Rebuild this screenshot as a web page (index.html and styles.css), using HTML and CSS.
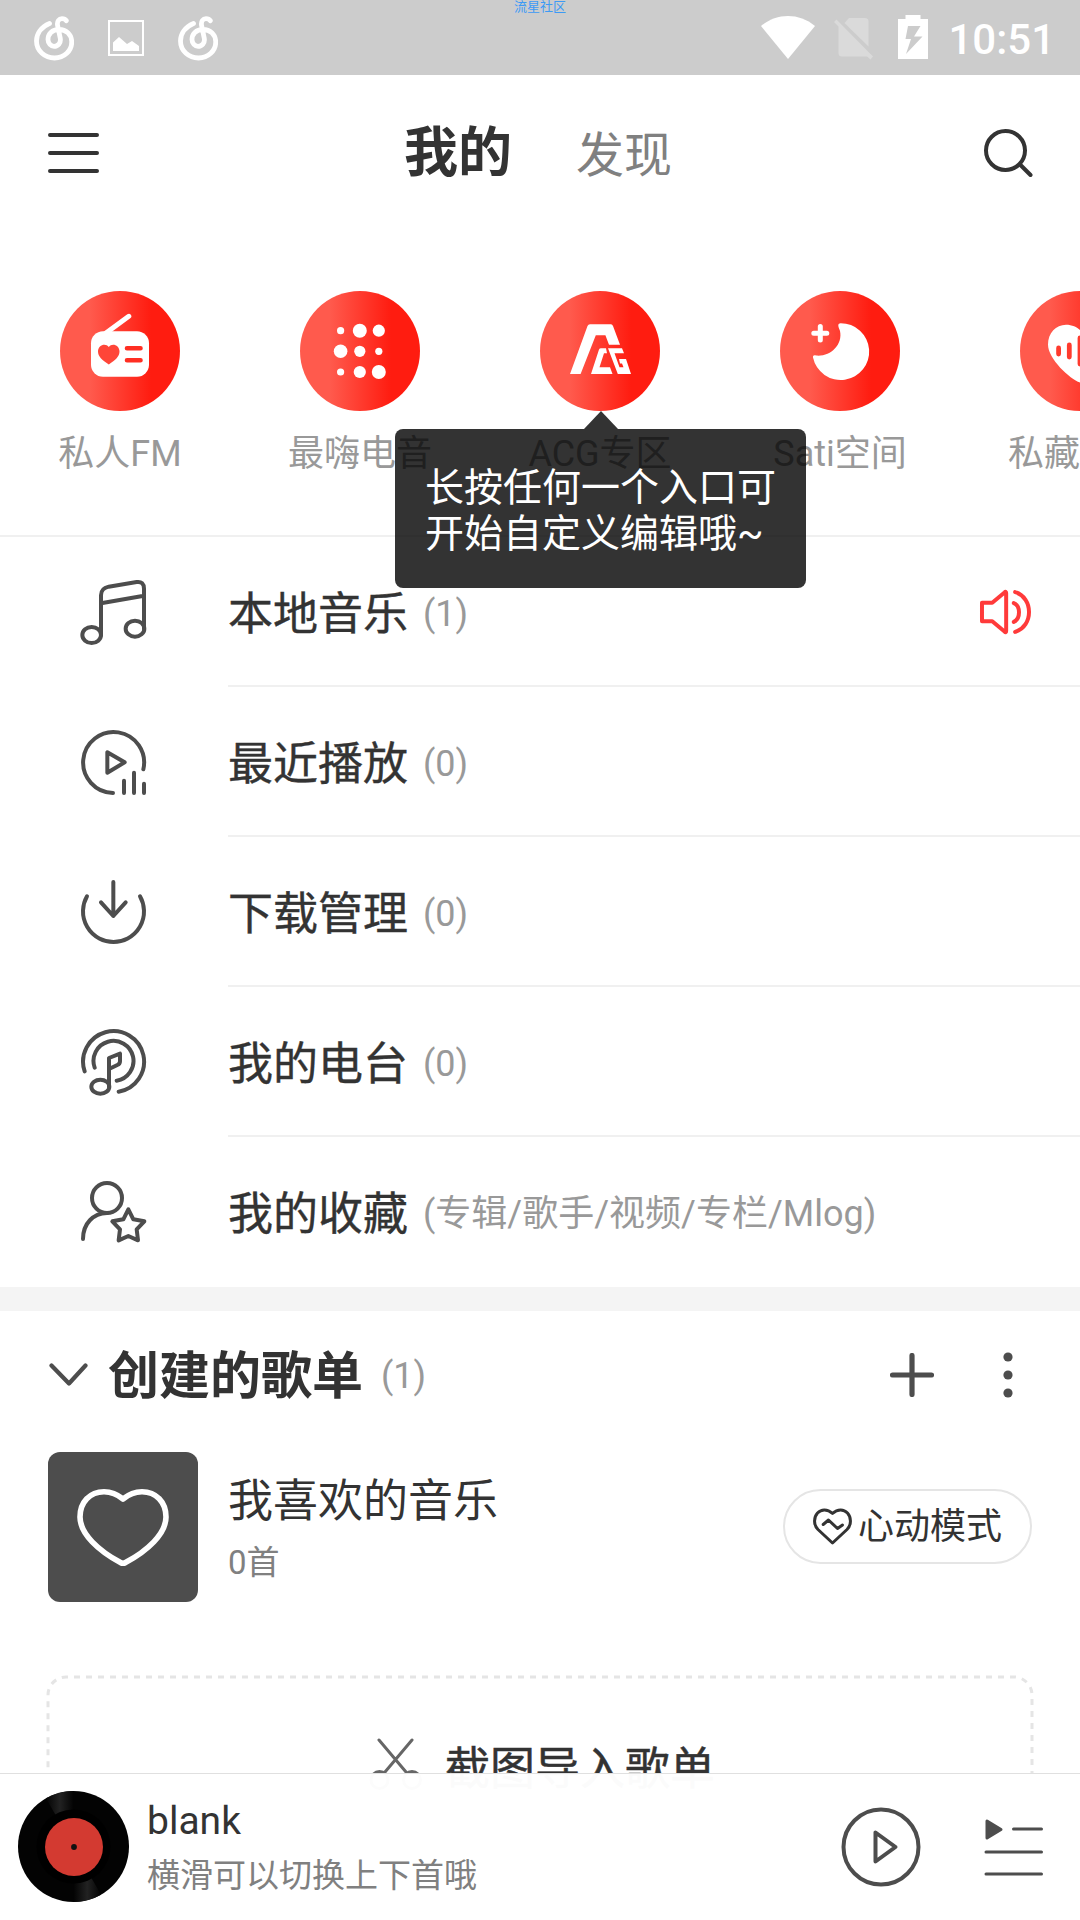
FILE: index.html
```html
<!DOCTYPE html>
<html lang="zh-CN">
<head>
<meta charset="utf-8">
<title>我的</title>
<link rel="stylesheet" href="styles.css">
</head>
<body>
<div class="screen">
  <div class="statusbar">
    <div class="status-left">
      <svg class="ic-cloud" viewBox="0 0 40 45"><path d="M15.5 7.5C7 11 2.5 18 2.5 25C2.5 35 11 42 20.5 42C30 42 38 35 37.7 25.5C37.5 18 32 13.5 25 13.5C18 13.5 14 18 14 23.5C14 27.5 17 30.3 20 30.3C24 30.3 27 27 26.3 22.5L23.5 9C23 5 25 2.7 28 2.7C30 2.7 31.5 3.5 32.3 4.7"/></svg>
      <svg class="ic-picture" viewBox="0 0 36 36"><rect x="1" y="1" width="34" height="34" fill="none" stroke="#fff" stroke-width="2"/><path d="M5 31V22.500L11 17L19 24L24 21L31 26V31Z" fill="#fff"/></svg>
      <svg class="ic-cloud" viewBox="0 0 40 45"><path d="M15.5 7.5C7 11 2.5 18 2.5 25C2.5 35 11 42 20.5 42C30 42 38 35 37.7 25.5C37.5 18 32 13.5 25 13.5C18 13.5 14 18 14 23.5C14 27.5 17 30.3 20 30.3C24 30.3 27 27 26.3 22.5L23.5 9C23 5 25 2.7 28 2.7C30 2.7 31.5 3.5 32.3 4.7"/></svg>
    </div>
    <div class="status-right">
      <svg class="ic-wifi" viewBox="0 0 54 44"><path d="M0 10C16 -3.300 38 -3.300 54 10L27 43Z" fill="#fff"/></svg>
      <svg class="ic-sim" viewBox="0 0 40 44"><g fill="#dadada"><path d="M11.500 6L16 1H32Q35.500 1 35.500 4.500V29.500Z"/><path d="M1 5L3.500 2.500L40 39.500L37.500 42.500L34 39.500H9Q5.500 39.500 5.500 36V9.500Z"/></g></svg>
      <svg class="ic-battery" viewBox="0 0 30 44"><path fill-rule="evenodd" fill="#fff" d="M0 4H7.500V0H22.500V4H30V44H0ZM10 11L7.500 24H13L8 39L24.500 21.500H16L22.500 11Z"/></svg>
      <span class="clock">10:51</span>
    </div>
    <span class="watermark">流星社区</span>
  </div>

  <header class="topbar">
    <svg class="ic-menu" viewBox="0 0 51 40"><path d="M2 2H49M2 20H49M2 38H49"/></svg>
    <nav class="tabs">
      <span class="tab tab-active">我的</span>
      <span class="tab">发现</span>
    </nav>
    <svg class="ic-search" viewBox="0 0 50 50"><circle cx="22.500" cy="22.500" r="19.500"/><path d="M37 36.500L47.500 47"/></svg>
  </header>

  <section class="entries">
    <div class="entry">
      <div class="bubble"><svg viewBox="0 0 120 120"><path d="M68.800 25.300L46 42" stroke="#fff" stroke-width="5" stroke-linecap="round"/><rect x="31" y="40.300" width="58" height="45.400" rx="12" fill="#fff"/><path d="M48.800 73.500C42 69 38 65.500 38 60.500C38 54 45.500 51.500 48.800 56C52 51.500 59.500 54 59.500 60.500C59.500 65.500 55.500 69 48.800 73.500Z" fill="#ff4538"/><path d="M67 57.300H80.500M67 69.300H80.500" stroke="#ff2e22" stroke-width="4.600" stroke-linecap="round"/></svg></div>
      <span class="entry-label">私人FM</span>
    </div>
    <div class="entry">
      <div class="bubble"><svg viewBox="0 0 120 120"><g fill="#fff"><circle cx="40.600" cy="39.700" r="3.600"/><circle cx="59.800" cy="39.700" r="7"/><circle cx="78.800" cy="39.700" r="6.100"/><circle cx="40.600" cy="60.300" r="6.800"/><circle cx="59.800" cy="60.300" r="5.600"/><circle cx="78.800" cy="60.300" r="3.600"/><circle cx="40.600" cy="81" r="3.600"/><circle cx="59.800" cy="81" r="6.100"/><circle cx="78.800" cy="81" r="7"/></g></svg></div>
      <span class="entry-label">最嗨电音</span>
    </div>
    <div class="entry">
      <div class="bubble"><svg viewBox="0 0 120 120"><g fill="#fff"><path d="M30 83L47.500 35Q48.200 33.300 50 33.300H71Q72.300 33.300 73 35L80 53.700H69L65.400 44.300H55.800L40.600 83Z"/><path d="M51 83L59 58.500Q59.500 57.300 61 57.300H66L67 62.300H64L59.500 76.300H70L72.500 83Z"/><path d="M68 57.300H82L84 62.300H74.500L79.500 76.300H83.500L82 72.500H80L79 68H86L91 83H77.800Z"/></g></svg></div>
      <span class="entry-label">ACG专区</span>
    </div>
    <div class="entry">
      <div class="bubble"><svg viewBox="0 0 120 120"><path fill="#fff" d="M60.500 32.200A28.400 28.400 0 1 1 33 66.500C32.800 64.500 34 64 36 64.600C50 66 63 54 60 40C59.500 38 58 36 58.300 33.800Q58.500 32.300 60.500 32.200Z"/><path d="M40.300 35.500V49M33.800 42.300H46.800" stroke="#fff" stroke-width="5" stroke-linecap="round"/></svg></div>
      <span class="entry-label">Sati空间</span>
    </div>
    <div class="entry">
      <div class="bubble"><svg viewBox="0 0 120 120"><path fill="#fff" d="M60 91.500C50 88 28 68 28 53.500C28 42 36 33.700 46 33.700C52 33.700 57 36 60 39C63 36 68 33.700 74 33.700C84 33.700 92 42 92 53.500C92 68 70 88 60 91.500Z"/><path d="M38.600 57V63M49.300 54V66M60 47V73" stroke="#ff3a2d" stroke-width="4.800" stroke-linecap="round"/></svg></div>
      <span class="entry-label">私藏推荐</span>
    </div>
    <div class="tooltip">长按任何一个入口可<br>开始自定义编辑哦~</div>
  </section>

  <ul class="menu">
    <li class="row">
      <svg class="row-icon" viewBox="120 54 204 204"><ellipse cx="155" cy="225" rx="28" ry="24"/><ellipse cx="285" cy="206" rx="28" ry="24"/><path d="M183 225V106Q183 85 206 80L290 66Q312 63 312 86V206M183 130L312 107"/></svg>
      <div class="row-body"><span class="row-title">本地音乐</span><span class="count">(1)</span>
        <svg class="ic-speaker" viewBox="56 54 160 144"><path d="M65 98H96L133 67Q138 62 138 69V183Q138 190 133 185L96 154H65ZM165 66C221 82 221 170 165 186M161 99C182 107 182 147 161 156"/></svg>
      </div>
    </li>
    <li class="row">
      <svg class="row-icon" viewBox="120 504 204 204"><path d="M219 699A91.500 91.500 0 1 1 310 628M202 577V638L254 607ZM252 662V699M282 638V699M312 671V699"/></svg>
      <div class="row-body"><span class="row-title">最近播放</span><span class="count">(0)</span></div>
    </li>
    <li class="row">
      <svg class="row-icon" viewBox="120 954 204 204"><path d="M141 1009A91.500 91.500 0 1 0 300 1009M220 966V1068M183 1027L220 1068L257 1027"/></svg>
      <div class="row-body"><span class="row-title">下载管理</span><span class="count">(0)</span></div>
    </li>
    <li class="row">
      <svg class="row-icon" viewBox="120 84 204 204"><path d="M134 214A91.500 91.500 0 1 1 236 275M164 203A60 60 0 1 1 230 242M207 262V174L240 161V184Q240 192 232 195L207 207"/><ellipse cx="181" cy="260" rx="27" ry="21"/></svg>
      <div class="row-body"><span class="row-title">我的电台</span><span class="count">(0)</span></div>
    </li>
    <li class="row">
      <svg class="row-icon" viewBox="120 534 204 204"><circle cx="201" cy="594" r="45"/><path d="M129 717C129 670 160 640 201 639M265 628L280 658L313 664L290 688L294 721L265 708L236 721L240 688L217 664L250 658Z"/></svg>
      <div class="row-body"><span class="row-title">我的收藏</span><span class="count">(专辑/歌手/视频/专栏/Mlog)</span></div>
    </li>
  </ul>

  <section class="playlists">
    <div class="pl-head">
      <svg class="ic-chevron" viewBox="0 0 40 24"><path d="M2.500 2.500L20 20.500L36.500 2.500"/></svg>
      <h2>创建的歌单</h2>
      <span class="count">(1)</span>
      <svg class="ic-plus" viewBox="0 0 44 44"><path d="M22 2.500V41.500M2.500 22H41.500"/></svg>
      <svg class="ic-more" viewBox="0 0 10 46"><circle cx="5" cy="5" r="4.600"/><circle cx="5" cy="23" r="4.600"/><circle cx="5" cy="41" r="4.600"/></svg>
    </div>
    <div class="pl-item">
      <div class="cover"><svg viewBox="0 0 150 150"><path d="M75 47C69 42 63 39.700 56 39.700C42 39.700 32 50 32 65C32 82 51 99 72.500 110.500Q75 112 77.500 110.500C99 99 118 82 118 65C118 50 108 39.700 94 39.700C87 39.700 81 42 75 47Z"/></svg></div>
      <div class="pl-text"><span class="pl-title">我喜欢的音乐</span><span class="pl-sub">0首</span></div>
      <div class="pill">
        <svg viewBox="0 0 40 38"><path d="M19.500 5.500C14 .5 8 1.500 4.500 5C.5 9.500 .5 17 5 21.500L19.500 35L34 21.500C38.500 17 38.500 9.500 34.500 5C31 1.500 25 .5 19.500 5.500Z"/><path d="M10.200 16.500L15.500 12L24.500 20.500L29.500 17"/></svg>
        <span>心动模式</span>
      </div>
    </div>
    <div class="import">
      <svg class="import-frame" viewBox="0 0 988 180"><path d="M20 2H968A18 18 0 0 1 986 20V180" stroke-dashoffset="4"/><path d="M20 2A18 18 0 0 0 2 20V180" stroke-dashoffset="1.700"/></svg>
      <svg class="ic-scissors" viewBox="0 0 54 54"><path d="M10 2L37 34M43 2L16 34"/><circle cx="10.500" cy="42" r="8.500"/><circle cx="43" cy="42" r="8.500"/></svg>
      <span>截图导入歌单</span>
    </div>
  </section>

  <footer class="player">
    <svg class="disc" viewBox="0 0 111 111">
      <defs><linearGradient id="shine"><stop offset="0" stop-color="#030303"/><stop offset=".5" stop-color="#222"/><stop offset="1" stop-color="#030303"/></linearGradient></defs>
      <circle cx="55.500" cy="55.500" r="55.500" fill="#030303"/>
      <path d="M55.500 55.500L28 7.300A55.500 55.500 0 0 1 55.500 0Z" fill="url(#shine)"/>
      <path d="M55.500 55.500L83 103.700A55.500 55.500 0 0 1 55.500 111Z" fill="url(#shine)"/>
      <circle cx="55.500" cy="55.500" r="37" fill="#000"/>
      <circle cx="56" cy="56" r="29" fill="#d33a31"/><circle cx="56" cy="56" r="2.900" fill="#111"/>
    </svg>
    <div class="song"><span class="song-name">blank</span><span class="song-tip">横滑可以切换上下首哦</span></div>
    <svg class="ic-play" viewBox="0 0 80 80"><circle cx="40" cy="40" r="37.500"/><path d="M34.500 25.500V54.500L54.500 40Z"/></svg>
    <svg class="ic-list" viewBox="0 0 60 60"><path d="M29.500 12H57.500M2 35H57.500M2 57H57.500"/><path class="solid" d="M3 4V21L17 12.500Z"/></svg>
  </footer>
</div>
</body>
</html>
```

FILE: styles.css
```css
* { box-sizing: border-box; margin: 0; padding: 0; }
body {
  font-family: Roboto, "Noto Sans CJK SC", sans-serif;
  color: #333;
  background: #fff;
}
svg { display: block; flex: none; fill: none; stroke-linecap: round; stroke-linejoin: round; }
.screen { position: relative; width: 1080px; height: 1920px; overflow: hidden; background: #fff; }

/* status bar */
.statusbar {
  position: relative;
  display: flex;
  justify-content: space-between;
  height: 75px;
  padding: 15px 25px 0 34px;
  background: #ccc;
}
.status-left { display: flex; gap: 34px; }
.ic-cloud { width: 40px; height: 45px; margin-top: 1px; stroke: #fff; stroke-width: 4.8px; }
.ic-picture { width: 36px; height: 36px; margin-top: 5px; stroke-linejoin: miter; }
.status-right { display: flex; }
.ic-wifi { width: 54px; height: 44px; margin-top: 1px; }
.ic-sim { width: 40px; height: 44px; margin: 2px 0 0 18px; }
.ic-battery { width: 30px; height: 44px; margin-left: 25px; }
.clock { margin-left: 20px; font-size: 42px; font-weight: 500; line-height: 50px; color: #fff; white-space: nowrap; }
.watermark { position: absolute; top: -3px; left: 514px; font-size: 13px; line-height: 19px; color: #3c9af5; }

/* top bar */
.topbar { display: flex; align-items: center; height: 156px; padding: 0 47px 0 48px; }
.ic-menu { width: 51px; height: 40px; stroke: #333; stroke-width: 4px; }
.tabs { display: flex; align-items: center; gap: 64px; margin: 0 auto 0 305px; }
.tab { padding-top: 5px; font-size: 48px; line-height: 60px; color: #808080; }
.tab-active { padding-top: 1px; font-size: 54px; font-weight: 700; color: #333; }
.ic-search { width: 50px; height: 50px; stroke: #333; stroke-width: 4px; }

/* round entries */
.entries {
  position: relative;
  display: flex;
  height: 306px;
  padding-top: 60px;
  border-bottom: 2px solid #f0f0f0;
}
.entry { flex: 0 0 240px; display: flex; flex-direction: column; align-items: center; gap: 18px; }
.bubble { width: 120px; height: 120px; border-radius: 50%; background: linear-gradient(90deg, #ff5a4d 25%, #ff1c10 76%); }
.entry-label { font-size: 36px; line-height: 50px; color: #999; white-space: nowrap; }
.tooltip {
  position: absolute;
  left: 395px;
  top: 198px;
  width: 411px;
  height: 159px;
  padding: 36px 0 0 30px;
  border-radius: 8px;
  background: rgba(0, 0, 0, .8);
  color: #fff;
  font-size: 39px;
  line-height: 46px;
  white-space: nowrap;
}
.tooltip::before {
  content: "";
  position: absolute;
  left: 189px;
  top: -18px;
  width: 34px;
  height: 18px;
  background: rgba(0, 0, 0, .8);
  clip-path: polygon(50% 0, 100% 100%, 0 100%);
}

/* menu rows */
.menu { list-style: none; }
.row { display: flex; align-items: center; height: 150px; padding-left: 80px; }
.row-icon { width: 68px; height: 68px; stroke: #4d4d4d; stroke-width: 12px; }
.row-body {
  flex: 1;
  display: flex;
  align-items: center;
  height: 150px;
  margin-left: 80px;
  padding-right: 48px;
  border-bottom: 2px solid #f0f0f0;
}
.row:last-child .row-body { border-bottom-color: transparent; }
.row-title { padding-top: 8px; font-size: 45px; line-height: 60px; -webkit-text-stroke: .4px #333; }
.count { margin-left: 15px; padding-top: 6px; font-size: 36px; line-height: 50px; color: #999; white-space: nowrap; }
.ic-speaker { width: 53px; height: 48px; margin: 2px 0 0 auto; stroke: #ff3a3a; stroke-width: 12px; }

/* playlists */
.playlists { border-top: 24px solid #f4f4f4; }
.pl-head { display: flex; align-items: center; height: 127px; padding: 0 67px 0 49px; }
.ic-chevron { width: 40px; height: 24px; stroke: #4d4d4d; stroke-width: 4.2px; }
.pl-head h2 { margin-left: 19px; padding-top: 5px; font-size: 51px; font-weight: 700; line-height: 70px; }
.pl-head .count { margin: 3px 0 0 18px; padding-top: 0; }
.ic-plus { width: 44px; height: 44px; margin-left: auto; stroke: #4d4d4d; stroke-width: 5.2px; }
.ic-more { width: 10px; height: 46px; margin-left: 69px; fill: #4d4d4d; }
.pl-item { display: flex; align-items: center; height: 150px; margin-top: 14px; padding: 0 48px; }
.cover { width: 150px; height: 150px; border-radius: 12px; background: #4d4d4d; }
.cover svg { stroke: #fff; stroke-width: 5.6px; }
.pl-text { display: flex; flex-direction: column; margin-left: 30px; padding-top: 6px; }
.pl-title { font-size: 45px; line-height: 66px; }
.pl-sub { font-size: 33px; line-height: 56px; color: #808080; }
.pill {
  display: flex;
  align-items: center;
  width: 249px;
  height: 75px;
  margin: 0 0 1px auto;
  padding-left: 28px;
  gap: 5px;
  border: 2px solid #e5e5e5;
  border-radius: 38px;
  font-size: 36px;
  line-height: 50px;
  white-space: nowrap;
}
.pill svg { width: 40px; height: 38px; stroke: #333; stroke-width: 3px; }
.pill span { padding-top: 1px; }
.import {
  position: relative;
  display: flex;
  align-items: center;
  height: 180px;
  margin: 73px 46px 0;
  padding-left: 323px;
  gap: 22px;
  font-size: 45px;
  -webkit-text-stroke: .5px #333;
}
.import-frame {
  position: absolute;
  inset: 0;
  width: 988px;
  height: 180px;
  stroke: #e5e5e5;
  stroke-width: 3px;
  stroke-dasharray: 6 6;
  stroke-linecap: butt;
}
.ic-scissors { width: 54px; height: 54px; margin-bottom: 1px; stroke: #666; stroke-width: 3px; }

/* player bar */
.player {
  position: absolute;
  left: 0;
  right: 0;
  bottom: 0;
  display: flex;
  align-items: center;
  height: 147px;
  padding: 0 36px 1px 18px;
  border-top: 1px solid #e0e0e0;
  background: rgba(255, 255, 255, .98);
}
.disc { width: 111px; height: 111px; }
.song { display: flex; flex-direction: column; margin-left: 18px; padding-top: 3px; }
.song-name { font-size: 39px; line-height: 56px; }
.song-tip { font-size: 33px; line-height: 54px; color: #808080; }
.ic-play { width: 80px; height: 80px; margin-left: auto; stroke: #4d4d4d; stroke-width: 4px; }
.ic-list { width: 60px; height: 60px; margin-left: 63px; stroke: #4d4d4d; stroke-width: 3px; }
.ic-list .solid { fill: #4d4d4d; }
```
